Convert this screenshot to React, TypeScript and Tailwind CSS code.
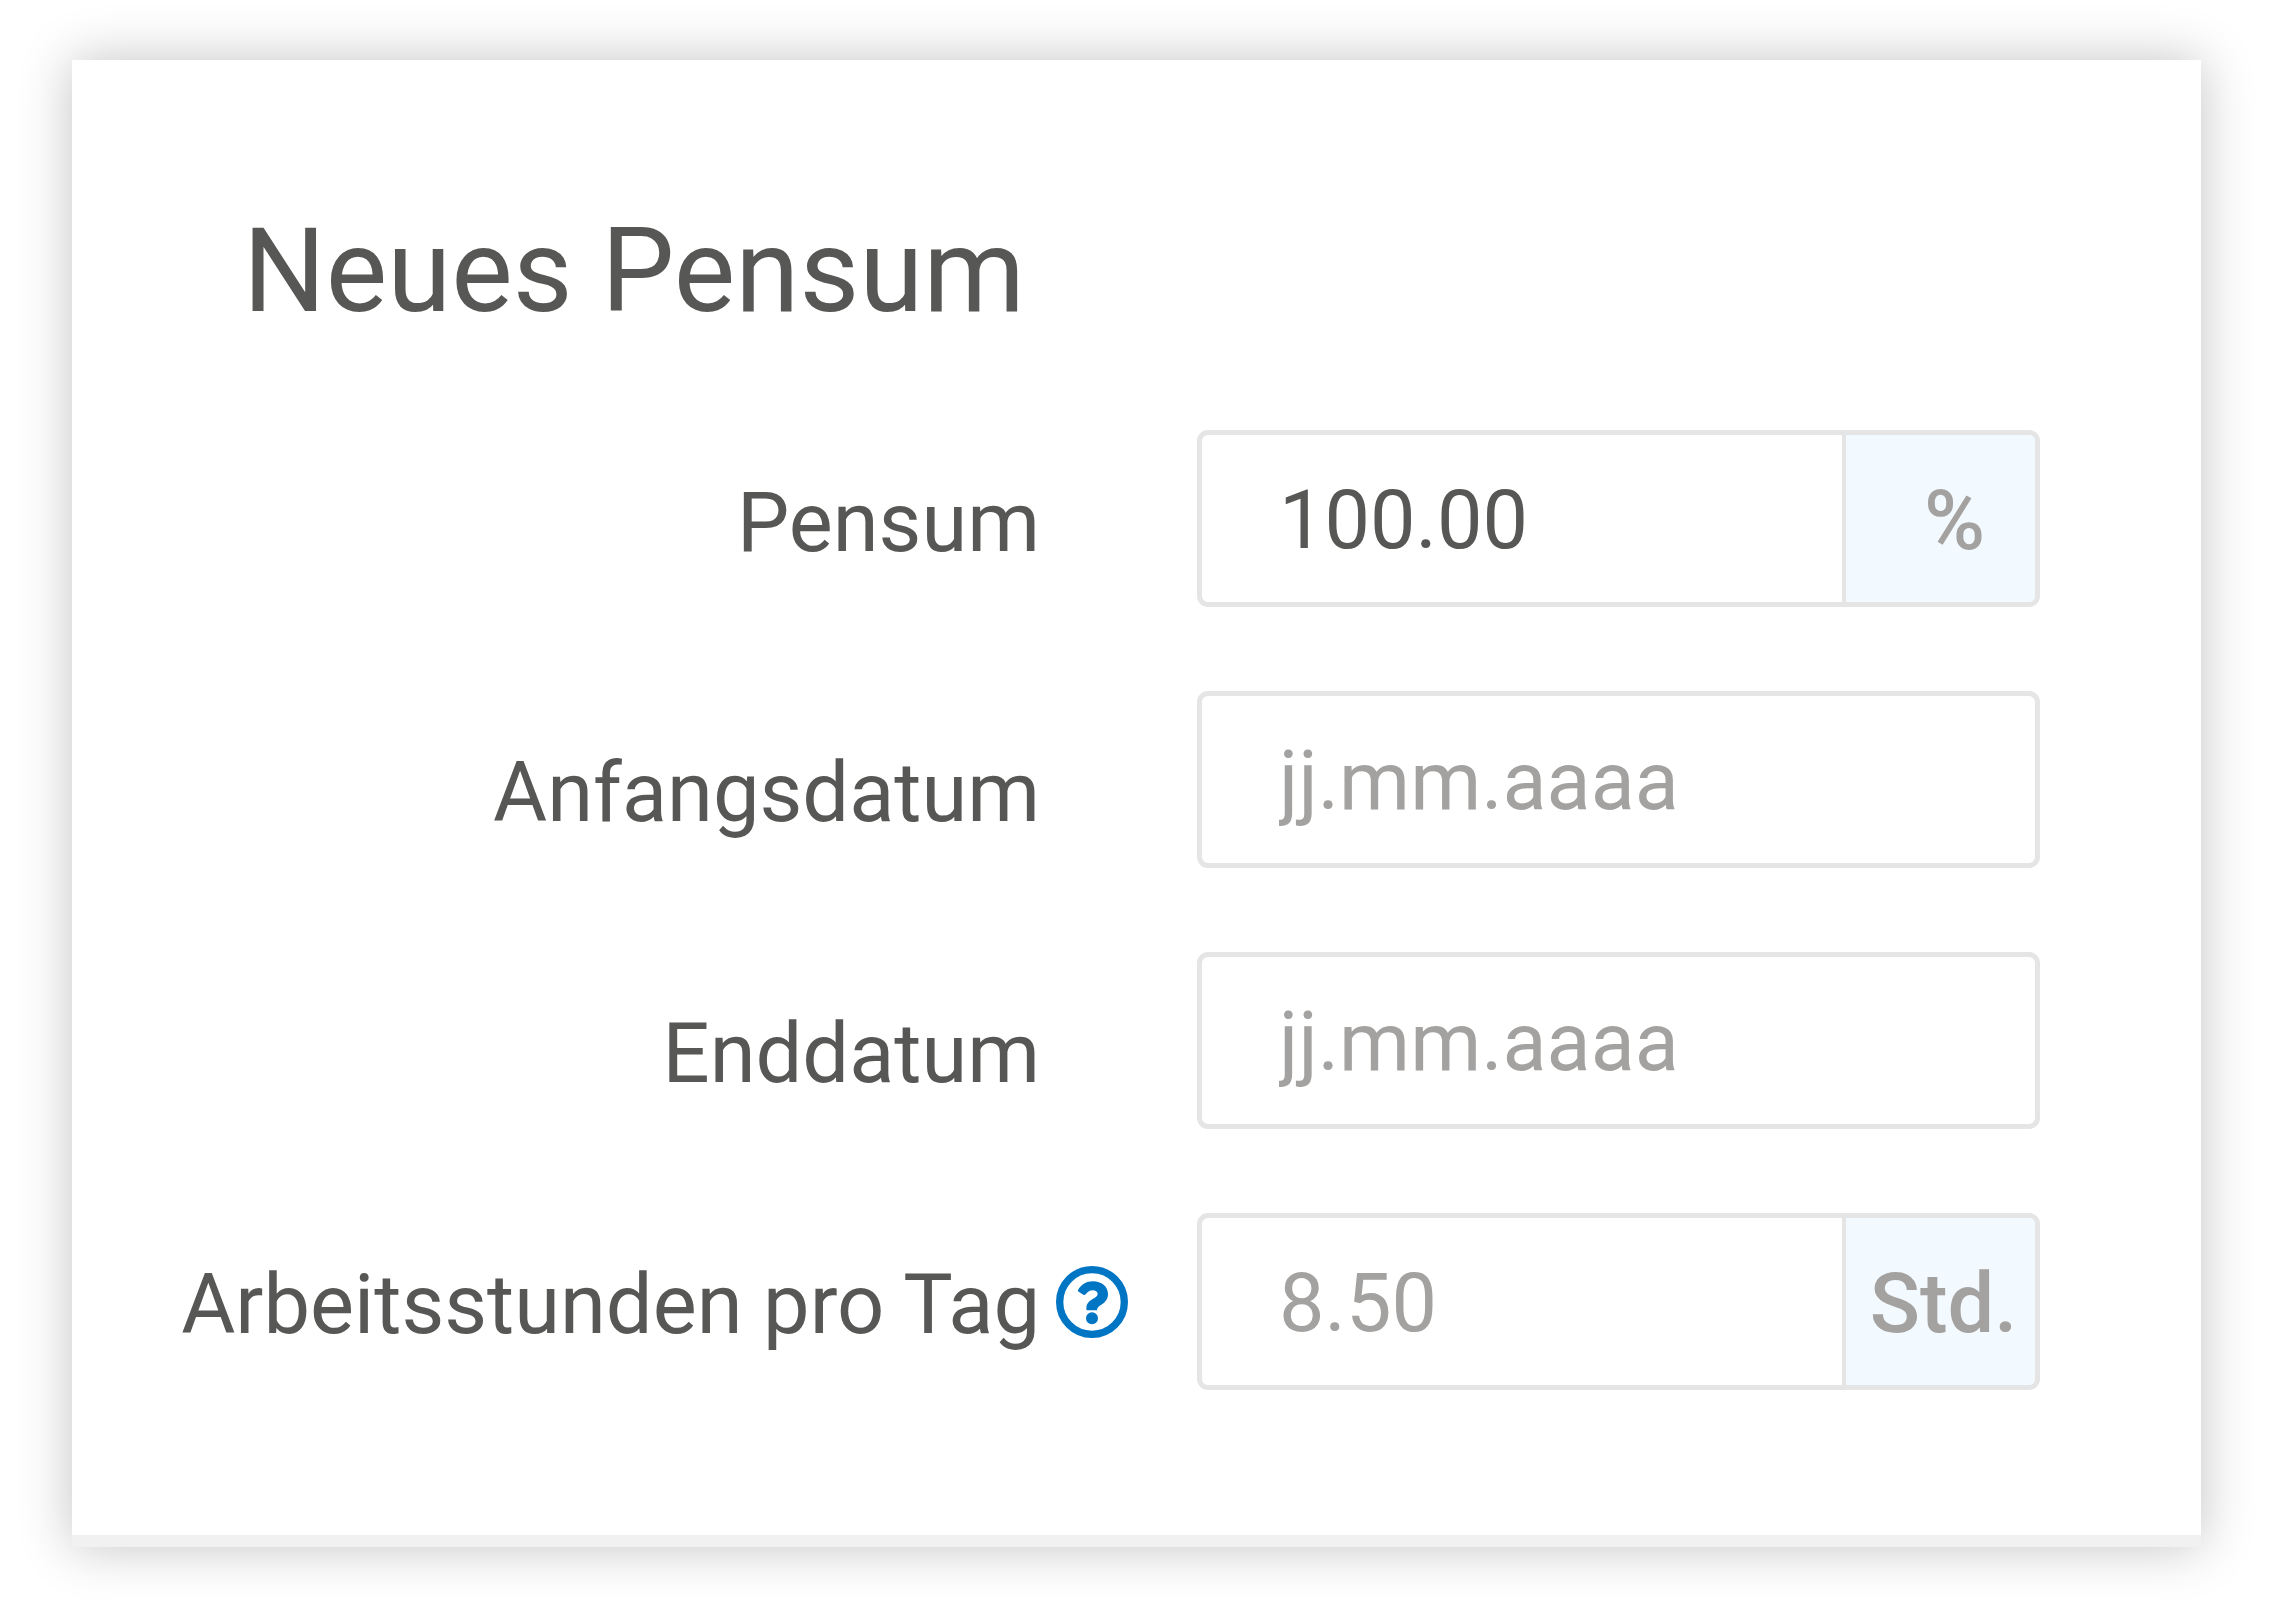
const label = "pr-[157px] text-right text-[83px] leading-[100px] text-[#575756] whitespace-nowrap";
const box = "flex h-[177px] w-[843px] overflow-hidden rounded-[11px] border-[5px] border-[#e5e5e5] bg-white";
const input = "min-w-0 flex-1 bg-transparent pt-1 pl-[77px] text-[81px] text-[#575756] outline-none placeholder:text-[#a4a2a0]";
const unit = "flex w-[193px] shrink-0 items-center border-l-[4px] border-[#e5e5e5] bg-[#f2f9ff] pt-[5px] text-[83px] font-medium text-[#a4a2a0]";

function HelpIcon() {
  return (
    <svg viewBox="0 0 216 216" className="size-[72px]" aria-hidden="true">
      <circle cx="108" cy="108" r="97" fill="none" stroke="currentColor" strokeWidth="22" />
      <path
        fill="currentColor"
        d="M66 72C76 55 91 46 111 46C136 46 156 61 156 84C156 99 148 109 136 116C127 122 123 125 123 133H94Q91 133 91 129V127C91 114 98 106 110 99C120 93 125 90 125 83C125 77 118 73 110 73C101 73 96 77 89 85Q86 89 82 86L68 77Q64 75 66 72Z"
      />
      <circle cx="108" cy="157" r="18" fill="currentColor" />
    </svg>
  );
}

export default function App() {
  return (
    <main className="min-h-screen bg-white pt-[60px] pr-[70px] pb-[70px] pl-[72px] font-['Roboto',sans-serif]">
      <form className="border-b-[12px] border-[#f1f1f1] bg-white pt-[143px] pb-[145px] shadow-[0_0_50px_rgba(0,0,0,0.24)]">
        <h1 className="pl-[171px] text-[116px] leading-[136px] text-[#575756]">Neues Pensum</h1>
        <div className="mt-[91px] grid grid-cols-[1125px_1fr] items-center gap-y-[84px]">
          <label htmlFor="pensum" className={label + " pt-2"}>Pensum</label>
          <div className={box}>
            <input id="pensum" className={input} defaultValue="100.00" />
            <span className={unit + " justify-end pr-[50px]"}>%</span>
          </div>
          <label htmlFor="start" className={label + " pt-[26px]"}>Anfangsdatum</label>
          <div className={box}>
            <input id="start" className={input} placeholder="jj.mm.aaaa" />
          </div>
          <label htmlFor="end" className={label + " pt-[26px]"}>Enddatum</label>
          <div className={box}>
            <input id="end" className={input} placeholder="jj.mm.aaaa" />
          </div>
          <div className="flex items-center justify-end pr-[69px]">
            <label htmlFor="hours" className="pt-[6px] text-[83px] leading-[100px] text-[#575756] whitespace-nowrap">Arbeitsstunden pro Tag</label>
            <button type="button" aria-label="Hilfe" className="ml-4 text-[#0075c4]">
              <HelpIcon />
            </button>
          </div>
          <div className={box}>
            <input id="hours" className={input} placeholder="8.50" />
            <span className={unit + " justify-center pl-[6px]"}>Std.</span>
          </div>
        </div>
      </form>
    </main>
  );
}
